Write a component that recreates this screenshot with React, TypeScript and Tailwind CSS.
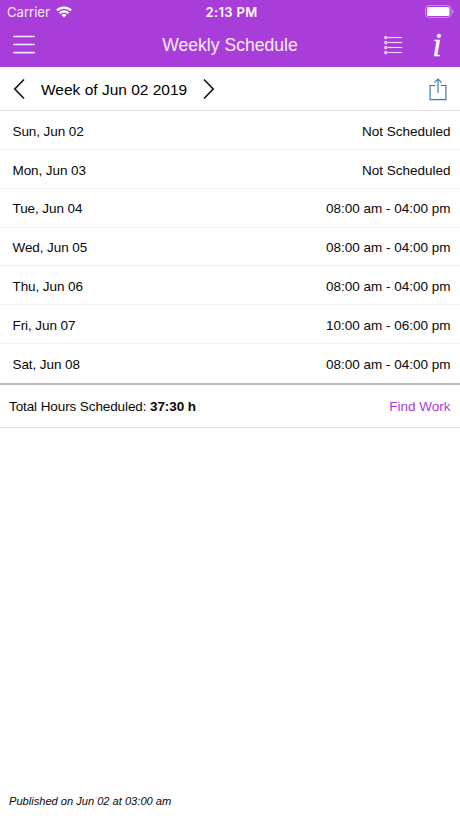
import type { ReactNode } from 'react';

interface Shift {
  day: string;
  hours: string;
}

const shifts: Shift[] = [
  { day: 'Sun, Jun 02', hours: 'Not Scheduled' },
  { day: 'Mon, Jun 03', hours: 'Not Scheduled' },
  { day: 'Tue, Jun 04', hours: '08:00 am - 04:00 pm' },
  { day: 'Wed, Jun 05', hours: '08:00 am - 04:00 pm' },
  { day: 'Thu, Jun 06', hours: '08:00 am - 04:00 pm' },
  { day: 'Fri, Jun 07', hours: '10:00 am - 06:00 pm' },
  { day: 'Sat, Jun 08', hours: '08:00 am - 04:00 pm' },
];

const WifiIcon = () => (
  <svg width="16" height="12" viewBox="0 0 16 12" fill="none" stroke="#fff" strokeWidth="2.2">
    <path d="M.9 4.5a10 10 0 0 1 14.2 0" />
    <path d="M3.5 7.3a6.3 6.3 0 0 1 9 0" />
    <path d="M8 11.5 5.5 9a3.5 3.5 0 0 1 5 0z" fill="#fff" stroke="none" />
  </svg>
);

const BatteryIcon = () => (
  <svg width="29" height="13" viewBox="0 0 29 13" fill="none">
    <rect x="0.5" y="0.5" width="25.5" height="12" rx="3.5" stroke="#fff" strokeOpacity="0.4" />
    <rect x="2" y="2" width="22.5" height="9" rx="1.6" fill="#fff" />
    <path d="M27.2 4.5v4c1-.4 1.3-1.1 1.3-2s-.3-1.6-1.3-2z" fill="#fff" fillOpacity="0.5" />
  </svg>
);

const MenuIcon = () => (
  <svg width="22" height="19" viewBox="0 0 22 19" stroke="#fbeaff" strokeWidth="1.7" strokeLinecap="round">
    <path d="M.9 1.5h20.3M.9 9.5h20.3M.9 17.6h20.3" />
  </svg>
);

const ListIcon = () => (
  <svg width="19" height="19" viewBox="0 0 19 19" fill="none" stroke="#f3dcfb" strokeWidth="1.1">
    {[1.5, 6.5, 11.5, 16.5].map((y) => (
      <g key={y}>
        <rect x="0.8" y={y - 0.9} width="2" height="2" rx="0.5" />
        <path d={`M3.5 ${y}H18.2`} />
      </g>
    ))}
  </svg>
);

const ShareIcon = () => (
  <svg width="18" height="23" viewBox="0 0 18 23" fill="none" stroke="#3f78b8" strokeWidth="1.2">
    <path d="M6.2 7.5H1.1v14.2h15.8V7.5h-5.1" />
    <path d="M9 14.8V1.2M5.3 4.7 9 1l3.7 3.7" />
  </svg>
);

const Chevron = ({ d }: { d: string }) => (
  <svg width="12" height="22" viewBox="0 0 12 22" fill="none" stroke="#111" strokeWidth="1.6">
    <path d={d} />
  </svg>
);

const IconButton = ({ label, children }: { label: string; children: ReactNode }) => (
  <button type="button" aria-label={label} className="flex items-center justify-center">
    {children}
  </button>
);

const Header = () => (
  <header className="h-[67px] bg-[#a93dd9] text-white">
    <div className="grid h-6 grid-cols-3 items-center pl-[7px] pr-[6px]">
      <div className="flex items-center gap-[6px] font-['Inter',sans-serif] text-[13.1px] text-white/90">
        <span className="pt-px">Carrier</span>
        <WifiIcon />
      </div>
      <span className="pt-px pl-[2px] text-center font-['Inter',sans-serif] text-[13px] font-semibold tracking-[0.35px]">
        2:13 PM
      </span>
      <div className="flex justify-end pb-px">
        <BatteryIcon />
      </div>
    </div>
    <div className="grid h-[43px] grid-cols-[1fr_auto_1fr] items-center pl-[13px] pr-[18px]">
      <div className="flex pb-[2px]">
        <IconButton label="Menu">
          <MenuIcon />
        </IconButton>
      </div>
      <h1 className="pb-px pl-[5px] text-[17.6px] leading-[42px] text-white/90">Weekly Schedule</h1>
      <div className="flex items-center justify-end gap-[29px] pb-px">
        <IconButton label="List">
          <ListIcon />
        </IconButton>
        <IconButton label="Info">
          <span className="w-[10px] font-['Liberation_Serif',serif] text-[34px] leading-8 italic [-webkit-text-stroke:0.35px_#fff]">
            i
          </span>
        </IconButton>
      </div>
    </div>
  </header>
);

const WeekNav = () => (
  <div className="flex h-[44px] items-center border-b border-[#dedede] pl-[13px] pr-[13.5px]">
    <IconButton label="Previous week">
      <Chevron d="M11 1.5 1.8 11 11 20.5" />
    </IconButton>
    <span className="mx-4 w-[146px] pt-[3px] text-[15.5px] whitespace-nowrap text-black">Week of Jun 02 2019</span>
    <IconButton label="Next week">
      <Chevron d="M1 1.5 10.2 11 1 20.5" />
    </IconButton>
    <div className="ml-auto pt-[2px]">
      <IconButton label="Share">
        <ShareIcon />
      </IconButton>
    </div>
  </div>
);

const App = () => {
  return (
    <main className="flex h-screen flex-col bg-white font-['Liberation_Sans',Arial,sans-serif] text-[13.5px] text-[#080808]">
      <Header />
      <WeekNav />
      <ul className="border-b-2 border-[#b8b8b8]">
        {shifts.map((shift) => (
          <li
            key={shift.day}
            className="flex h-[38.85px] items-center justify-between border-b border-[#f1f1f1] pt-[4px] pr-[9.5px] pl-[12.5px] last:border-b-0 last:pt-[3px]"
          >
            <span className="tracking-[-0.08px]">{shift.day}</span>
            <span>{shift.hours}</span>
          </li>
        ))}
      </ul>
      <div className="flex h-[43px] items-center justify-between border-b border-[#e4e4e4] pt-[3px] pr-[9.5px] pl-[9px]">
        <span className="tracking-[-0.1px]">
          Total Hours Scheduled: <b>37:30 h</b>
        </span>
        <a className="text-[#a93dd9]">Find Work</a>
      </div>
      <footer className="mt-auto pb-[9px] pl-[9px] text-[11.1px] leading-4 italic">
        Published on Jun 02 at 03:00 am
      </footer>
    </main>
  );
};

export default App;
